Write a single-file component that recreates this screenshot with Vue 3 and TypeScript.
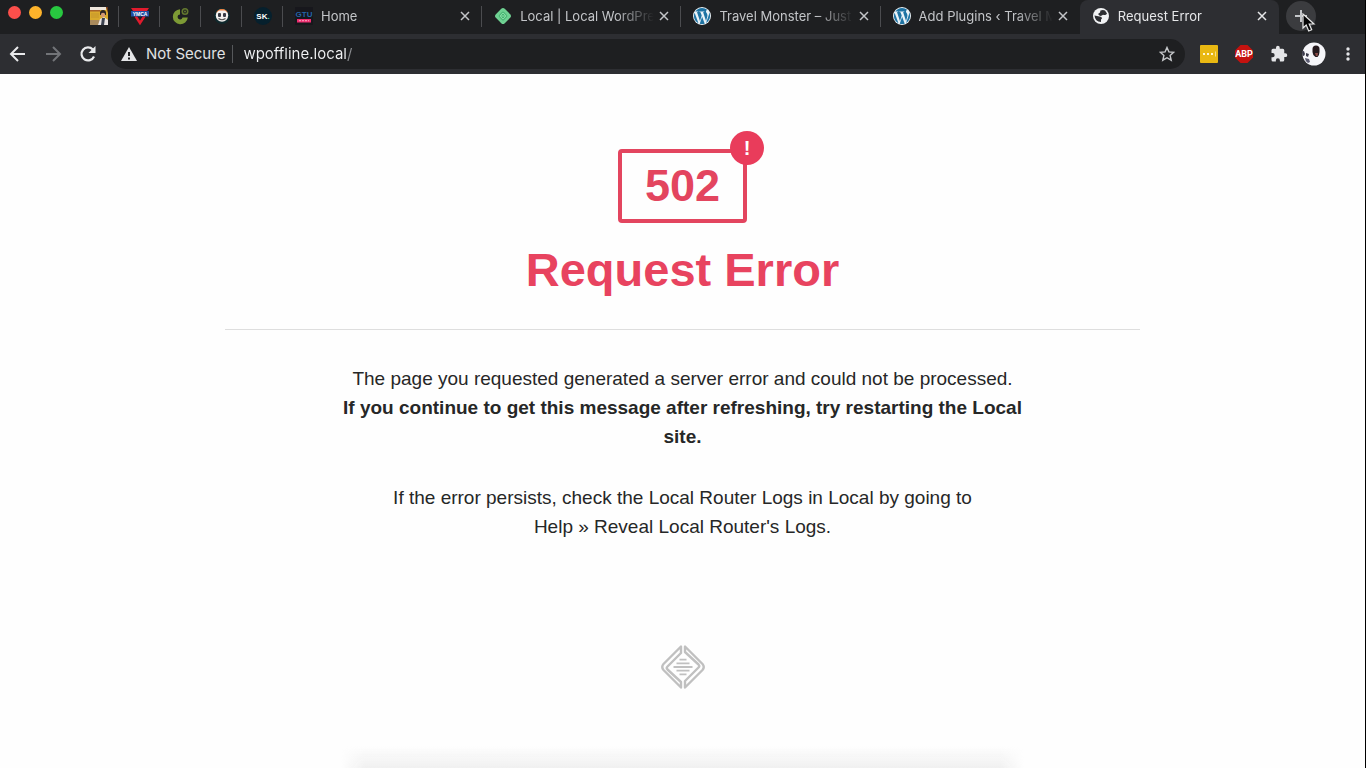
<script setup lang="ts">
import { ref } from 'vue'

interface PinnedTab {
  id: string
  label: string
}
interface Tab {
  id: number
  title: string
  icon: 'gtu' | 'local' | 'wordpress' | 'globe'
  active?: boolean
}

const pinned: PinnedTab[] = [
  { id: 'photo', label: 'Pinned photo page' },
  { id: 'ymca', label: 'YMCA' },
  { id: 'green', label: 'Pinned green page' },
  { id: 'face', label: 'Pinned avatar page' },
  { id: 'sk', label: 'SK.' },
]

const tabs: Tab[] = [
  { id: 1, title: 'Home', icon: 'gtu' },
  { id: 2, title: 'Local | Local WordPre', icon: 'local' },
  { id: 3, title: 'Travel Monster – Just', icon: 'wordpress' },
  { id: 4, title: 'Add Plugins ‹ Travel M', icon: 'wordpress' },
  { id: 5, title: 'Request Error', icon: 'globe', active: true },
]

const url = ref('wpoffline.local/')
</script>

<template>
  <div class="browser">
    <header class="chrome">
      <div class="strip">
        <div class="lights">
          <button class="light red" aria-label="Close window"></button>
          <button class="light amber" aria-label="Minimise window"></button>
          <button class="light green" aria-label="Zoom window"></button>
        </div>

        <button v-for="p in pinned" :key="p.id" class="pin" :aria-label="p.label">
          <svg v-if="p.id === 'photo'" width="18" height="18" viewBox="0 0 18 18">
            <rect width="18" height="18" fill="#d9a92c" />
            <rect width="16" height="3" fill="#eee6dc" />
            <rect y="3" width="10" height="1.500" fill="#a8622a" />
            <rect x="1" y="6" width="8" height="5" fill="#cf9f2c" />
            <rect y="13" width="10" height="5" fill="#a98a5c" />
            <path d="M8 18l2-6 4-2 4 3v5z" fill="#e9e4e2" />
            <path d="M10 6q0-3 3-3t3 3v2h-6z" fill="#2d2522" />
            <circle cx="13" cy="8" r="2.200" fill="#d49a72" />
            <path d="M12 11h3l-1 7h-3z" fill="#3b414e" />
            <path d="M16 0h2v6z" fill="#6d3521" />
          </svg>
          <svg v-else-if="p.id === 'ymca'" width="18" height="18" viewBox="0 0 18 18">
            <path d="M0 1h18l-2 3H2z" fill="#e01b2d" />
            <path d="M4.500 9L9 16l4.500-7" fill="none" stroke="#e01b2d" stroke-width="2.500" />
            <rect y="4" width="18" height="5.500" fill="#1d4ea3" />
            <text x="9" y="8.500" text-anchor="middle" class="mini" font-size="5" fill="#fff">YMCA</text>
          </svg>
          <svg v-else-if="p.id === 'green'" width="18" height="18" viewBox="0 0 18 18">
            <path d="M8 2.200A7.500 7.500 0 1 0 15.800 10.500H10.500A2.500 2.500 0 1 1 8 7.500z" fill="#7d9a35" />
            <circle cx="13" cy="4.500" r="2.700" fill="none" stroke="#63782f" stroke-width="1.600" />
            <circle cx="13" cy="4.500" r="1" fill="#63782f" />
          </svg>
          <svg v-else-if="p.id === 'face'" width="18" height="18" viewBox="0 0 18 18">
            <circle cx="9" cy="9" r="8" fill="#10292d" />
            <circle cx="9" cy="8.500" r="6.200" fill="#f4f1ef" />
            <path d="M3 6a6.500 6.500 0 0 1 12 0L12 3.500H6z" fill="#ef7e3c" />
            <rect x="5" y="6" width="3" height="4" rx="1" fill="#393b45" />
            <rect x="10" y="6" width="3" height="4" rx="1" fill="#393b45" />
            <path d="M5.500 11.500q3.500 2.500 7 0" fill="none" stroke="#555" stroke-width="1.200" />
          </svg>
          <svg v-else width="18" height="18" viewBox="0 0 18 18">
            <circle cx="9" cy="9" r="9" fill="#06202d" />
            <text x="9" y="12" text-anchor="middle" class="mini" font-size="8" fill="#fff">SK<tspan fill="#3fd0a8">.</tspan></text>
          </svg>
        </button>

        <div v-for="t in tabs" :key="t.id" class="tab" :class="{ active: t.active, last: t.id === 4 }">
          <svg v-if="t.icon === 'gtu'" class="favicon" viewBox="0 0 18 18">
            <rect width="18" height="18" fill="#17171c" />
            <text x="9" y="10" text-anchor="middle" class="mini" font-size="8" fill="#2465a8">GTU</text>
            <rect x="2" y="12" width="14" height="3.500" fill="#ee2c6e" />
            <path d="M4 13.700h10" stroke="#f7a3bf" stroke-dasharray="2 1" />
          </svg>
          <svg v-else-if="t.icon === 'local'" class="favicon" viewBox="0 0 18 18">
            <rect x="2.700" y="2.700" width="12.600" height="12.600" rx="2.500" transform="rotate(45 9 9)" fill="#6fd192" />
            <rect x="6" y="6" width="6" height="6" rx="1" transform="rotate(45 9 9)" fill="#8ce0a8" stroke="#45b472" />
            <path d="M7 9h4M8 7.500h2M8 10.500h2" stroke="#45b472" />
          </svg>
          <svg v-else-if="t.icon === 'wordpress'" class="favicon" viewBox="0 0 24 24">
            <circle cx="12" cy="12" r="12" fill="#e9f2f7" />
            <path
              fill="#1e73a3"
              d="M21.469 6.825c.84 1.537 1.318 3.300 1.318 5.175 0 3.979-2.156 7.456-5.363 9.325l3.295-9.527c.615-1.540.820-2.771.820-3.864 0-.405-.026-.780-.070-1.110m-7.981.105c.647-.030 1.232-.105 1.232-.105.582-.075.514-.930-.067-.899 0 0-1.755.135-2.880.135-1.064 0-2.850-.150-2.850-.150-.585-.030-.661.855-.075.885 0 0 .540.061 1.125.090l1.680 4.605-2.370 7.080L5.354 6.900c.649-.030 1.234-.100 1.234-.100.585-.075.516-.930-.065-.896 0 0-1.746.138-2.874.138-.200 0-.438-.008-.690-.015C4.911 3.150 8.235 1.215 12 1.215c2.809 0 5.365 1.072 7.286 2.833-.046-.003-.091-.009-.141-.009-1.060 0-1.812.923-1.812 1.914 0 .890.513 1.643 1.060 2.531.411.720.890 1.643.890 2.977 0 .915-.354 1.994-.821 3.479l-1.075 3.585zM12 22.784c-1.059 0-2.081-.153-3.048-.437l3.237-9.406 3.315 9.087c.024.053.050.101.078.149-1.120.393-2.325.609-3.582.609M1.211 12c0-1.564.336-3.050.935-4.390L7.290 21.709C3.694 19.960 1.212 16.271 1.211 12"
            />
          </svg>
          <svg v-else class="favicon" viewBox="0 0 18 18">
            <circle cx="9" cy="9" r="8" fill="#f1f2f4" />
            <path d="M8.500 3.500q2.500-1 4.500 0l2 3q-1 2-3 1.500-1.500-.500-2 .500L8 9 6 7l2-1.500z" fill="#2d2e32" />
            <path d="M2.500 8.500l5 1q2.500 0 2.500 2l-1 1v2.500q-6-.500-6.500-6.500z" fill="#2d2e32" />
          </svg>
          <span class="title">{{ t.title }}</span>
          <button class="close" :aria-label="'Close ' + t.title">
            <svg width="10" height="10" viewBox="0 0 10 10">
              <path d="M1 1l8 8M9 1L1 9" stroke="currentColor" stroke-width="1.500" />
            </svg>
          </button>
        </div>

        <div class="tail">
          <button class="new-tab" aria-label="New tab">
            <svg width="14" height="14" viewBox="0 0 14 14">
              <path d="M7 1v12M1 7h12" stroke="#c4c6c9" stroke-width="2" />
            </svg>
          </button>
          <svg class="cursor" width="14" height="20" viewBox="0 0 14 20">
            <path d="M1 1v14l3.200-3 2.500 6 3-1.300-2.500-5.700H12z" fill="#050505" stroke="#e8e8e8" stroke-width="1.200" />
          </svg>
        </div>
      </div>

      <div class="toolbar">
        <button class="nav" aria-label="Back">
          <svg width="18" height="18" viewBox="0 0 18 18">
            <path d="M16 9H3M9 2L2 9l7 7" fill="none" stroke="#e9eaec" stroke-width="2" />
          </svg>
        </button>
        <button class="nav" aria-label="Forward">
          <svg width="18" height="18" viewBox="0 0 18 18">
            <path d="M2 9h13M9 2l7 7-7 7" fill="none" stroke="#727478" stroke-width="2" />
          </svg>
        </button>
        <button class="nav" aria-label="Reload">
          <svg width="18" height="18" viewBox="0 0 18 18">
            <path d="M15 11.500A6.500 6.500 0 1 1 13.800 4.500" fill="none" stroke="#e9eaec" stroke-width="2.200" />
            <path d="M16.500 1v7h-7z" fill="#e9eaec" />
          </svg>
        </button>

        <div class="omnibox">
          <svg width="16" height="16" viewBox="0 0 16 16">
            <path d="M8 1l8 14H0z" fill="#e4e5e7" />
            <path d="M8 6v4M8 11.500v2" stroke="#1e1f21" stroke-width="2" />
          </svg>
          <label class="secure" for="address">Not Secure</label>
          <input id="address" v-model="url" class="address" type="text" spellcheck="false" />
          <button class="star" aria-label="Bookmark this tab">
            <svg width="16" height="16" viewBox="0 0 16 16">
              <path d="M8 1.500l1.900 4.400 4.800.400-3.600 3.200 1.100 4.700L8 11.700l-4.200 2.500 1.100-4.700L1.300 6.300l4.800-.400z" fill="none" stroke="#c6c8cb" stroke-width="1.400" />
            </svg>
          </button>
        </div>

        <div class="extensions">
          <button class="ext" aria-label="Notes extension">
            <svg width="18" height="18" viewBox="0 0 18 18">
              <rect width="18" height="18" rx="1" fill="#e9b812" />
              <path d="M3 9h2M7 9h2M11 9h2" stroke="#fff6d5" stroke-width="2" />
              <path d="M15.500 6.500v5" stroke="#f6dd84" />
            </svg>
          </button>
          <button class="ext" aria-label="Adblock Plus">
            <svg width="18" height="18" viewBox="0 0 18 18">
              <path d="M5.500 0h7L18 5.500v7L12.500 18h-7L0 12.500v-7z" fill="#c4120f" />
              <text x="9" y="12" text-anchor="middle" class="abp" font-size="9" fill="#fff">ABP</text>
            </svg>
          </button>
          <button class="ext" aria-label="Extensions">
            <svg width="18" height="18" viewBox="0 0 24 24">
              <path d="M20.500 11H19V7a2 2 0 0 0-2-2h-4V3.500a2.500 2.500 0 0 0-5 0V5H4a2 2 0 0 0-2 2v3.800h1.500a2.700 2.700 0 0 1 0 5.400H2V20a2 2 0 0 0 2 2h3.800v-1.500a2.700 2.700 0 0 1 5.400 0V22H17a2 2 0 0 0 2-2v-4h1.500a2.500 2.500 0 0 0 0-5z" fill="#e4e5e8" />
            </svg>
          </button>
          <button class="ext" aria-label="Profile">
            <svg width="24" height="24" viewBox="0 0 24 24">
              <circle cx="12" cy="12" r="11.500" fill="#f5f5f9" />
              <path d="M10.500 7q0-3.500 3.500-3.500T17.500 7v3q0 3-2 5h-2q-3-2-3-5z" fill="#25191d" />
              <path d="M13 11h3l-.500 3h-1.500z" fill="#8c4a45" />
              <path d="M0 9.500l2-.500 1 3-1 2-1.500-.500zM4 11l3 1-1 3-2-1z" fill="#3a3a4a" />
              <path d="M3 16l4 1 1 3-2 1q-3-2-3-5z" fill="#5b5b70" />
            </svg>
          </button>
          <button class="ext dots" aria-label="Menu">
            <svg width="4" height="16" viewBox="0 0 4 16">
              <circle cx="2" cy="3" r="1.700" fill="#e4e5e8" />
              <circle cx="2" cy="8" r="1.700" fill="#e4e5e8" />
              <circle cx="2" cy="13" r="1.700" fill="#e4e5e8" />
            </svg>
          </button>
        </div>
      </div>
    </header>

    <main class="page">
      <div class="code">
        502
        <span class="badge">!</span>
      </div>
      <h1>Request Error</h1>
      <hr />
      <div class="message">
        <p>
          The page you requested generated a server error and could not be processed.
          <strong>If you continue to get this message after refreshing, try restarting the Local site.</strong>
        </p>
        <p>
          If the error persists, check the Local Router Logs in Local by going to<br />
          Help » Reveal Local Router's Logs.
        </p>
      </div>
      <svg class="logo" width="44" height="44" viewBox="0 0 44 44" aria-label="Local">
        <g fill="none" stroke="#c0c0c0" stroke-width="2.400" stroke-linejoin="round">
          <path d="M20 1.500v6.500L6.500 21.500Q5 23 6.500 24.500L20 37v5.500L2.500 25Q0 22 2.500 19z" />
          <path d="M24 1.500v5.500L37.500 19.500Q39 21 37.500 22.500L24 36v6.500L41.500 25Q44 22 41.500 19z" />
          <path d="M18.500 14.700h7M15.500 18.300h13M12.500 22h19M15.500 25.700h13M18.500 29.300h7" stroke-width="1.800" />
        </g>
      </svg>
      <div class="dock-shadow"></div>
    </main>
  </div>
</template>

<style>
body {
  margin: 0;
  background: #fefefe;
}
</style>

<style scoped>
.browser {
  box-sizing: border-box;
  display: flex;
  flex-direction: column;
  min-height: 100vh;
  border-right: 1px solid #000;
  background: #fefefe;
  font-family: 'Liberation Sans', Arial, sans-serif;
}
button {
  display: flex;
  align-items: center;
  justify-content: center;
  margin: 0;
  padding: 0;
  border: 0;
  background: none;
  color: inherit;
}
svg {
  display: block;
  flex: none;
}
.mini {
  font-family: 'Liberation Sans', Arial, sans-serif;
  font-weight: 700;
}
.abp {
  font-family: Roboto, sans-serif;
  font-weight: 700;
}
.chrome {
  background: #1e1f21;
  color: #c3c5c8;
  font-family: Inter, Roboto, sans-serif;
}
.strip {
  display: flex;
  height: 34px;
}
.lights {
  box-sizing: border-box;
  display: flex;
  gap: 8px;
  width: 78px;
  padding: 6px 0 0 8px;
}
.light {
  width: 13px;
  height: 13px;
  border-radius: 50%;
}
.red {
  background: #fc4f4b;
}
.amber {
  background: #fdb32b;
}
.green {
  background: #28c840;
}
.pin {
  position: relative;
  width: 41px;
  height: 32px;
}
.pin::after,
.tab::after {
  content: '';
  position: absolute;
  top: 6px;
  right: 0;
  width: 1px;
  height: 21px;
  background: #4b4c4f;
}
.tab {
  position: relative;
  box-sizing: border-box;
  display: flex;
  flex: 1 1 0;
  align-items: center;
  min-width: 0;
  padding: 0 11px 2px 12px;
  font-size: 13px;
}
.tab.active {
  border-radius: 8px 8px 0 0;
  background: #2d2e32;
  color: #e6e7e9;
}
.tab.active::after,
.tab.last::after {
  display: none;
}
.favicon {
  width: 18px;
  height: 18px;
}
.title {
  flex: 1;
  margin-left: 8px;
  overflow: hidden;
  white-space: nowrap;
  mask-image: linear-gradient(90deg, #000 calc(100% - 42px), transparent calc(100% - 4px));
}
.close {
  width: 12px;
  height: 16px;
}
.tail {
  position: relative;
  box-sizing: border-box;
  width: 86px;
  padding: 1px 0 0 7px;
}
.new-tab {
  width: 30px;
  height: 30px;
  border-radius: 50%;
  background: #3b3c3f;
}
.cursor {
  position: absolute;
  top: 13px;
  left: 23px;
}
.toolbar {
  display: flex;
  align-items: center;
  height: 40px;
  background: #2d2e32;
}
.nav {
  width: 35px;
  height: 30px;
}
.omnibox {
  display: flex;
  flex: 1;
  align-items: center;
  height: 30px;
  margin-left: 6px;
  padding: 0 10px;
  border-radius: 15px;
  background: #1e1f21;
}
.secure {
  margin-left: 9px;
  padding-right: 7px;
  border-right: 1px solid #56585b;
  color: #e0e1e3;
  font-size: 15px;
  line-height: 18px;
}
.address {
  flex: 1;
  min-width: 0;
  margin-left: 10px;
  padding: 0;
  border: 0;
  outline: 0;
  background: linear-gradient(90deg, #f1f2f4 103px, #8d8f93 103px);
  background-clip: text;
  color: transparent;
  font-family: inherit;
  font-size: 15px;
  line-height: 20px;
}
.extensions {
  display: flex;
  align-items: center;
  width: 180px;
}
.ext {
  width: 35px;
}
.extensions .ext:first-child {
  margin-left: 6px;
}
.ext.dots {
  width: 33px;
}
.page {
  position: relative;
  display: flex;
  flex: 1;
  flex-direction: column;
  align-items: center;
  padding-top: 75px;
  color: #262727;
}
.code {
  position: relative;
  box-sizing: border-box;
  width: 129px;
  border: 4px solid #e3455f;
  border-radius: 4px;
  color: #e3455f;
  font-size: 45px;
  font-weight: 700;
  line-height: 66px;
  text-align: center;
}
.badge {
  position: absolute;
  top: -22px;
  right: -21px;
  width: 34px;
  height: 34px;
  border-radius: 50%;
  background: #e93c5b;
  color: #fff;
  font-size: 20px;
  line-height: 34px;
}
h1 {
  margin: 20px 0 0;
  color: #e8435f;
  font-size: 47px;
  font-weight: 700;
  line-height: 54px;
}
hr {
  width: 67%;
  margin: 32px 0 0;
  border: 0;
  border-top: 1px solid #dedede;
}
.message {
  width: 700px;
  max-width: 100%;
  margin-top: 34px;
  font-size: 19px;
  line-height: 29px;
  text-align: center;
}
.message p {
  margin: 0 0 32px;
}
.message strong {
  display: block;
}
.logo {
  margin-top: 72px;
}
.dock-shadow {
  position: absolute;
  bottom: 0;
  left: 25%;
  width: 50%;
  height: 22px;
  background: linear-gradient(180deg, transparent, #f0f0f0);
  mask-image: linear-gradient(90deg, transparent, #000 24px, #000 calc(100% - 24px), transparent);
}
</style>
